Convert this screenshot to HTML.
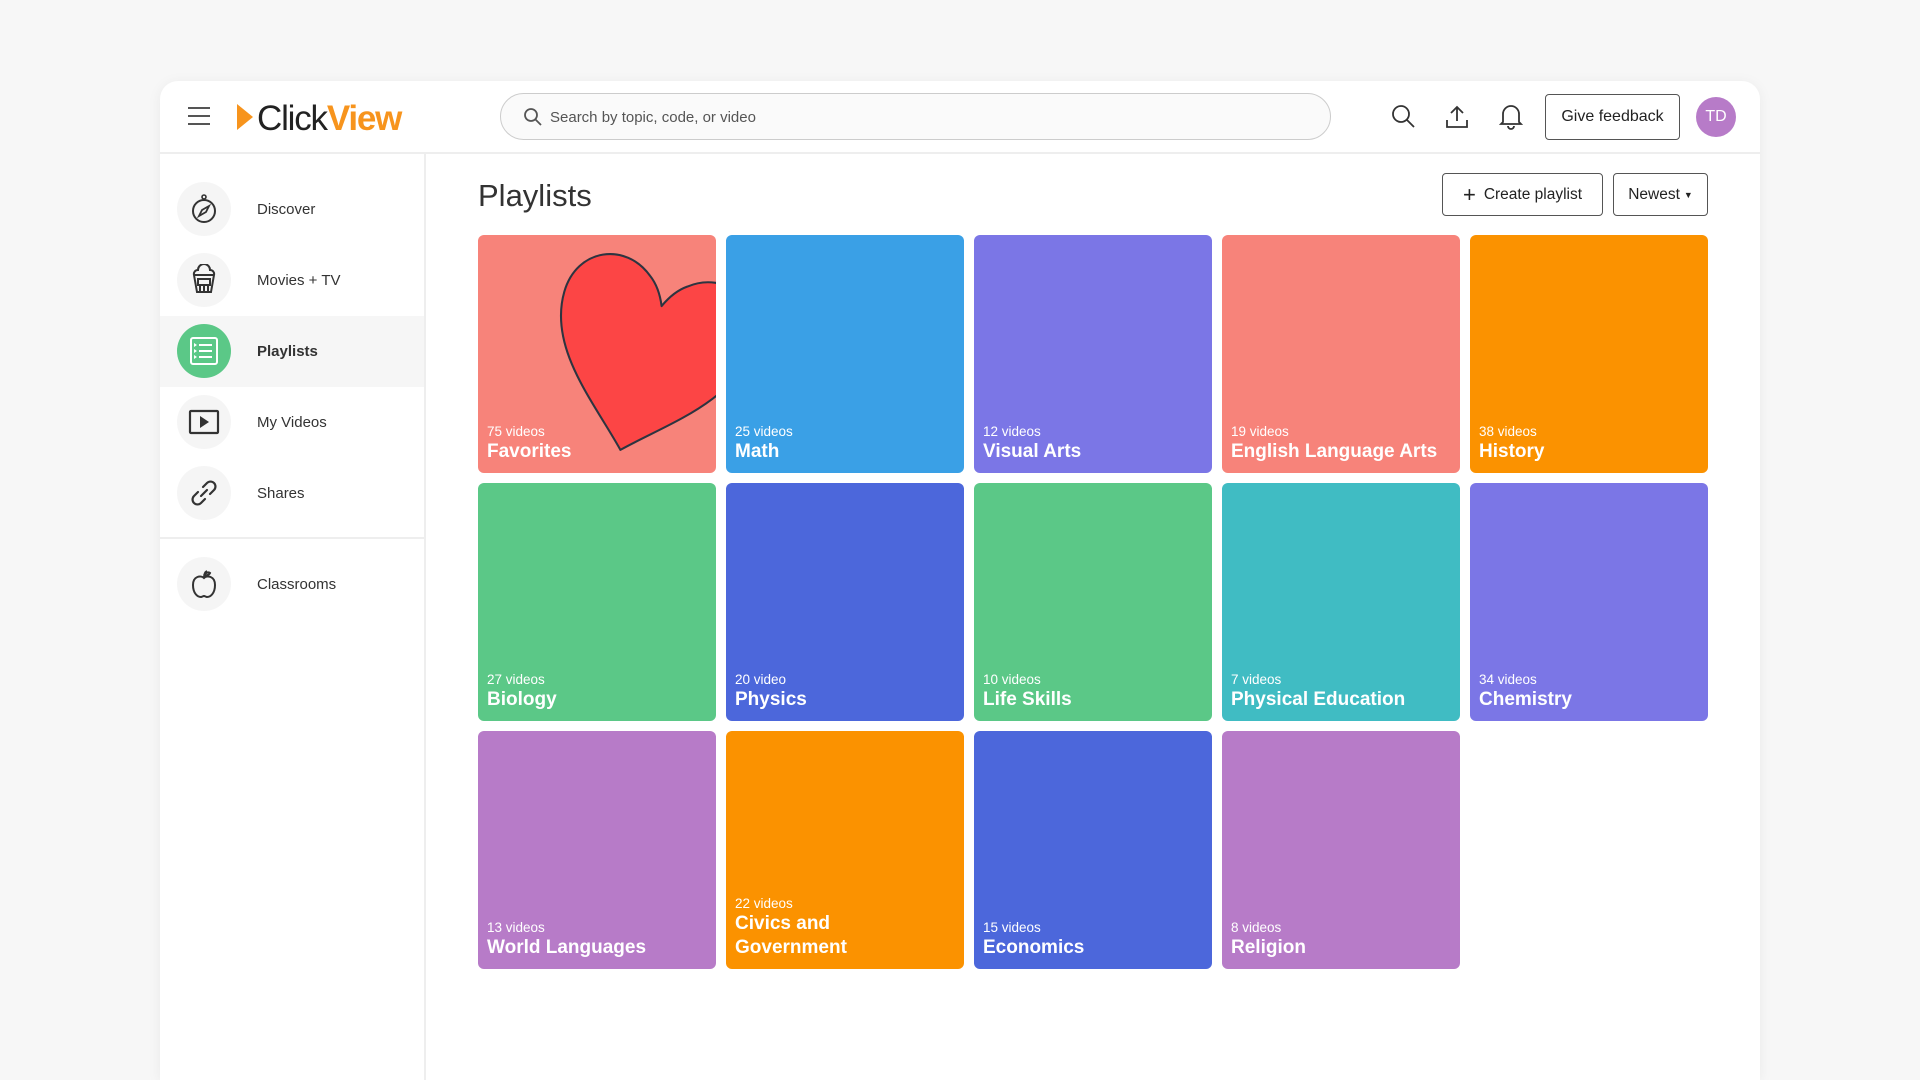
<!DOCTYPE html>
<html style="width:1920px;height:1080px;overflow:hidden"><head><meta charset="utf-8"><style>
*{box-sizing:border-box;margin:0;padding:0}
body{width:1920px;height:1080px;background:#f7f7f7;font-family:"Liberation Sans",sans-serif;color:#333;overflow:hidden;position:relative}
.card{position:absolute;left:160px;top:81px;width:1600px;height:999px;background:#fff;border-radius:18px 18px 0 0;box-shadow:0 2px 14px rgba(0,0,0,.06);overflow:hidden}
.hdr{position:absolute;left:0;top:0;width:1600px;height:73px;border-bottom:2px solid #eeeeee}
.side{position:absolute;left:0;top:73px;width:266px;height:926px;border-right:2px solid #eeeeee}
.item{position:absolute;left:0;width:264px;height:71px}
.item .ic{position:absolute;left:17px;top:8px;width:54px;height:54px;border-radius:50%;background:#f5f5f5;display:flex;align-items:center;justify-content:center}
.item .lb{position:absolute;left:97px;top:27px;font-size:15px;color:#333}
.active{background:#f6f6f6}
.active .ic{background:#5bc887}
.active .lb{font-weight:bold}
.tile{position:absolute;width:238px;height:238px;border-radius:6px;overflow:hidden;color:#fff}
.tile .c{position:absolute;left:9px;bottom:34px;font-size:13.5px}
.tile .t{position:absolute;left:9px;bottom:9px;font-size:19px;font-weight:bold;line-height:24px}
.btn{position:absolute;border:1.5px solid #555;border-radius:4px;font-size:16px;color:#222;display:flex;align-items:center;justify-content:center;background:#fff}
</style></head><body>
<div class="card">
 <div class="hdr">
  <svg style="position:absolute;left:27px;top:24px" width="24" height="22"><path d="M1 3h22M1 11h22M1 19h22" stroke="#555" stroke-width="2"/></svg>
  <svg style="position:absolute;left:76px;top:23px" width="18" height="26"><path d="M1 0L17 13L1 26Z" fill="#f7941d"/></svg>
  <div style="position:absolute;left:97px;top:16px;font-size:35px;letter-spacing:-1.2px;line-height:44px"><span style="color:#222">Click</span><span style="color:#f7941d;font-weight:bold">View</span></div>
  <div style="position:absolute;left:340px;top:12px;width:831px;height:47px;border:1.5px solid #ccc;border-radius:24px;background:#fafafa">
   <svg style="position:absolute;left:22px;top:13px" width="20" height="20"><circle cx="8" cy="8" r="6" stroke="#555" stroke-width="1.8" fill="none"/><path d="M12.5 12.5L18 18" stroke="#555" stroke-width="1.8"/></svg>
   <div style="position:absolute;left:49px;top:15px;font-size:15px;color:#555">Search by topic, code, or video</div>
  </div>
  <svg style="position:absolute;left:1231px;top:23px" width="26" height="26"><circle cx="10" cy="10" r="8" stroke="#333" stroke-width="1.8" fill="none"/><path d="M16 16L23 23" stroke="#333" stroke-width="1.8"/></svg>
  <svg style="position:absolute;left:1285px;top:23px" width="24" height="26"><path d="M12 17V3M6 9l6-6 6 6M2 16v7h20v-7" stroke="#333" stroke-width="1.8" fill="none"/></svg>
  <svg style="position:absolute;left:1339px;top:22px" width="24" height="28"><path d="M4 19V11a8 8 0 0 1 16 0v8l2 2H2z M9 23a3 3 0 0 0 6 0" stroke="#333" stroke-width="1.8" fill="none"/></svg>
  <div class="btn" style="left:1385px;top:13px;width:135px;height:46px">Give feedback</div>
  <div style="position:absolute;left:1536px;top:16px;width:40px;height:40px;border-radius:50%;background:#b77bc8;color:#fff;font-size:16px;display:flex;align-items:center;justify-content:center">TD</div>
 </div>
 <div class="side">
  <div class="item" style="top:20px"><div class="ic"><svg width="30" height="32"><circle cx="15" cy="18" r="11" stroke="#333" stroke-width="2" fill="none"/><circle cx="15" cy="4" r="2" stroke="#333" stroke-width="1.6" fill="none"/><path d="M20 13l-7 4-3 6 7-4z" stroke="#333" stroke-width="1.8" fill="none"/></svg></div><div class="lb">Discover</div></div>
  <div class="item" style="top:91px"><div class="ic"><svg width="30" height="32"><path d="M5 11a4 4 0 0 1 4-5 5 5 0 0 1 12 0 4 4 0 0 1 4 5z M5 11l3 17h14l3-17 M9 15h12v6H9z M11 21v7M15 21v7M19 21v7" stroke="#333" stroke-width="2" fill="none"/></svg></div><div class="lb">Movies + TV</div></div>
  <div class="item active" style="top:162px"><div class="ic"><svg width="32" height="32"><rect x="3" y="3" width="26" height="26" rx="2" stroke="#fff" stroke-width="2" fill="none"/><path d="M11 10h13M11 16h13M11 22h13" stroke="#fff" stroke-width="2"/><path d="M6 8l3 2-3 2zM6 14l3 2-3 2zM6 20l3 2-3 2z" fill="#fff"/></svg></div><div class="lb">Playlists</div></div>
  <div class="item" style="top:233px"><div class="ic"><svg width="32" height="26"><rect x="2" y="2" width="28" height="22" rx="1" stroke="#333" stroke-width="2.2" fill="none"/><path d="M12 7l9 6-9 6z" fill="#333"/></svg></div><div class="lb">My Videos</div></div>
  <div class="item" style="top:304px"><div class="ic"><svg width="32" height="32"><path d="M13 19l6-6 M15 10l4-4a4.5 4.5 0 0 1 7 7l-4 4 M17 22l-4 4a4.5 4.5 0 0 1-7-7l4-4" stroke="#333" stroke-width="2.2" fill="none" stroke-linecap="round"/></svg></div><div class="lb">Shares</div></div>
  <div style="position:absolute;left:0;top:383px;width:264px;height:2px;background:#eee"></div>
  <div class="item" style="top:395px"><div class="ic"><svg width="30" height="32"><path d="M15 10c-3-3-11-2-11 7s5 12 8 12c1 0 2-1 3-1s2 1 3 1c3 0 8-3 8-12s-8-10-11-7z M15 10c0-4 1-6 3-7M15 7c2-3 5-3 6-2-1 2-4 3-6 2" stroke="#333" stroke-width="2" fill="none"/></svg></div><div class="lb">Classrooms</div></div>
 </div>
 <div style="position:absolute;left:318px;top:97px;font-size:31px;color:#333">Playlists</div>
 <div class="btn" style="left:1282px;top:92px;width:161px;height:43px;font-size:15.5px"><span style="font-size:22px;margin-right:8px">+</span>Create playlist</div>
 <div class="btn" style="left:1453px;top:92px;width:95px;height:43px;font-size:15.5px">Newest<span style="font-size:9px;margin-left:4px">▼</span></div>
</div>

<div class="tile" style="left:478px;top:235px;background:#f7837a">
 <svg style="position:absolute;left:0;top:0" width="238" height="238"><g transform="translate(163 143) rotate(16) scale(1.3) translate(0 -22.5)"><path d="M0 80C-30 50 -75 20 -75 -25C-75 -60 -40 -75 -15 -55C-8 -50 -3 -42 0 -35C3 -42 8 -50 15 -55C40 -75 75 -60 75 -25C75 20 30 50 0 80Z" fill="#fc4545" stroke="#2d3440" stroke-width="1.6" stroke-linejoin="round"/></g></svg>
 <div class="c">75 videos</div><div class="t">Favorites</div></div>
<div class="tile" style="left:726px;top:235px;background:#3aa0e6"><div class="c">25 videos</div><div class="t">Math</div></div>
<div class="tile" style="left:974px;top:235px;background:#7b76e6"><div class="c">12 videos</div><div class="t">Visual Arts</div></div>
<div class="tile" style="left:1222px;top:235px;background:#f7837a"><div class="c">19 videos</div><div class="t">English Language Arts</div></div>
<div class="tile" style="left:1470px;top:235px;background:#fb9200"><div class="c">38 videos</div><div class="t">History</div></div>
<div class="tile" style="left:478px;top:483px;background:#5bc887"><div class="c">27 videos</div><div class="t">Biology</div></div>
<div class="tile" style="left:726px;top:483px;background:#4c67db"><div class="c">20 video</div><div class="t">Physics</div></div>
<div class="tile" style="left:974px;top:483px;background:#5bc887"><div class="c">10 videos</div><div class="t">Life Skills</div></div>
<div class="tile" style="left:1222px;top:483px;background:#40bcc3"><div class="c">7 videos</div><div class="t">Physical Education</div></div>
<div class="tile" style="left:1470px;top:483px;background:#7b76e6"><div class="c">34 videos</div><div class="t">Chemistry</div></div>
<div class="tile" style="left:478px;top:731px;background:#b77bc8"><div class="c">13 videos</div><div class="t">World Languages</div></div>
<div class="tile" style="left:726px;top:731px;background:#fb9200"><div class="c" style="bottom:58px">22 videos</div><div class="t">Civics and<br>Government</div></div>
<div class="tile" style="left:974px;top:731px;background:#4c67db"><div class="c">15 videos</div><div class="t">Economics</div></div>
<div class="tile" style="left:1222px;top:731px;background:#b77bc8"><div class="c">8 videos</div><div class="t">Religion</div></div>
</body></html>
